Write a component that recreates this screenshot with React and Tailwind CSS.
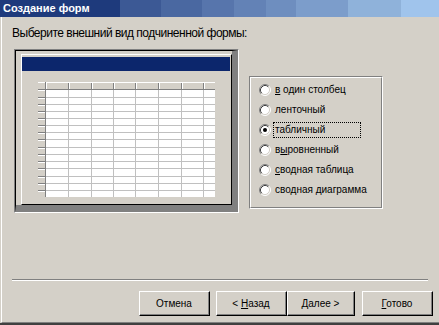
import React from "react";

const colX = [30, 53, 75, 97, 120, 143, 165];
const rowY = [15, 22, 29, 36, 43, 50, 57, 65, 72, 79, 86, 94, 101, 108];

const options = [
  { pre: "", u: "в", post: " один столбец" },
  { pre: "ленточный", u: "", post: "" },
  { pre: "табличный", u: "", post: "", checked: true },
  { pre: "в", u: "ы", post: "ровненный" },
  { pre: "", u: "с", post: "водная таблица" },
  { pre: "сводная ", u: "д", post: "иаграмма" },
];

const Radio = ({ checked }) => (
  <svg width="12" height="12" viewBox="0 0 12 12" className="shrink-0">
    <circle cx="6" cy="6" r="5" fill="#ffffff" />
    <path d="M2.11 9.89 A5.5 5.5 0 0 1 9.89 2.11" stroke="#808080" fill="none" />
    <path d="M9.89 2.11 A5.5 5.5 0 0 1 2.11 9.89" stroke="#ffffff" fill="none" />
    <path d="M2.82 9.18 A4.5 4.5 0 0 1 9.18 2.82" stroke="#404040" fill="none" />
    <path d="M9.18 2.82 A4.5 4.5 0 0 1 2.82 9.18" stroke="#d4d0c8" fill="none" />
    {checked && <circle cx="6" cy="6" r="2" fill="#000000" />}
  </svg>
);

const Button = ({ w, children }) => (
  <button className={`${w} h-[25px] border-t border-l border-white border-r border-b border-r-black border-b-black bg-[#d4d0c8] p-0`}>
    <div className="h-full w-full border-r border-b border-[#808080] flex items-center justify-center text-[10px] text-black">
      {children}
    </div>
  </button>
);

const MiniGrid = () => (
  <svg width="177" height="115" shapeRendering="crispEdges">
    <rect x="0" y="0" width="177" height="115" fill="#d4d0c8" />
    <rect x="8" y="8" width="169" height="107" fill="#ffffff" />
    <rect x="0" y="0" width="177" height="1" fill="#ffffff" />
    <rect x="0" y="7" width="177" height="1" fill="#808080" />
    <rect x="7" y="0" width="1" height="115" fill="#808080" />
    <rect x="8" y="1" width="1" height="6" fill="#ffffff" />
    <rect x="0" y="8" width="7" height="1" fill="#ffffff" />
    {colX.map((x) => (
      <g key={x}>
        <rect x={x} y="1" width="1" height="6" fill="#808080" />
        <rect x={x + 1} y="1" width="1" height="6" fill="#ffffff" />
        <rect x={x} y="8" width="1" height="107" fill="#c0c0c0" />
      </g>
    ))}
    {rowY.map((y) => (
      <g key={y}>
        <rect x="0" y={y} width="7" height="1" fill="#808080" />
        <rect x="0" y={y + 1} width="7" height="1" fill="#ffffff" />
        <rect x="8" y={y} width="169" height="1" fill="#c0c0c0" />
      </g>
    ))}
  </svg>
);

export default function App() {
  return (
    <div className="w-[439px] h-[325px] bg-[#d4d0c8] flex flex-col overflow-hidden text-black font-['Liberation_Sans',Arial,sans-serif]">
      <div className="h-[17px] shrink-0 flex items-center pl-[3px] bg-[linear-gradient(90deg,#1e3a7c_0px,#1e3a7c_120px,#3c5995_120px,#3c5995_161px,#4a68a1_161px,#4a68a1_202px,#5775ac_202px,#5775ac_234px,#6382b6_234px,#6382b6_266px,#6e8ebf_266px,#6e8ebf_296px,#7c9dcb_296px,#7c9dcb_348px,#8fb2da_348px,#8fb2da_401px,#a0c4ec_401px)]">
        <span className="text-white font-bold text-[11px] leading-none">Создание форм</span>
      </div>

      <div className="flex-1 flex flex-col ml-px border-l border-white border-b border-b-[#808080]">
        <p className="ml-[10px] mt-[9px] text-[12px] leading-[14px] tracking-[-0.5px]">Выберите внешний вид подчиненной формы:</p>

        <div className="flex items-start ml-[12px] mt-[9px]">
          {/* preview */}
          <div className="w-[225px] h-[164px] flex border-t border-l border-[#808080] border-b border-r border-b-white border-r-white">
            <div className="flex-1 flex flex-col border-t border-l border-black border-r-[6px] border-b-[7px] border-r-[#808080] border-b-[#808080] pl-[5px] pt-[3px]">
              <div className="flex-1 flex flex-col border-t border-l border-white border-r border-b border-r-black border-b-black">
                <div className="h-[14px] mt-[2px] mr-px bg-[#0c266c]" />
                <div className="ml-[16px] mt-[11px] flex">
                  <MiniGrid />
                </div>
              </div>
            </div>
          </div>

          {/* options */}
          <div className="ml-[10px] mt-[27px] w-[134px] h-[133px] flex border-t border-l border-[#808080] border-b border-r border-b-white border-r-white">
            <div className="flex-1 flex flex-col border-t border-l border-white border-b border-r border-b-[#808080] border-r-[#808080] pt-[2px] pl-[8px]">
              {options.map((o, i) => (
                <div key={i} className="h-[20px] flex items-center gap-[2px]">
                  <Radio checked={o.checked} />
                  <span
                    className={`px-px py-px border text-[10px] leading-[12px] whitespace-nowrap ${
                      o.checked ? "border-dotted border-black w-[88px]" : "border-transparent"
                    }`}
                  >
                    {o.pre}
                    {o.u && <u>{o.u}</u>}
                    {o.post}
                  </span>
                </div>
              ))}
            </div>
          </div>
        </div>

        <div className="ml-[10px] mt-[66px] w-[416px] h-[2px] border-t border-[#808080] border-b border-b-white" />

        <div className="flex ml-[137px] mt-[10px]">
          <Button w="w-[71px]">Отмена</Button>
          <div className="w-[6px]" />
          <Button w="w-[71px]">
            <span>
              &lt; <u>Н</u>азад
            </span>
          </Button>
          <Button w="w-[68px]">
            <span>
              <u>Д</u>алее &gt;
            </span>
          </Button>
          <div className="w-[7px]" />
          <Button w="w-[71px]">
            <span>
              <u>Г</u>отово
            </span>
          </Button>
        </div>
      </div>
      <div className="h-[2px] shrink-0 bg-[#404040]" />
    </div>
  );
}
